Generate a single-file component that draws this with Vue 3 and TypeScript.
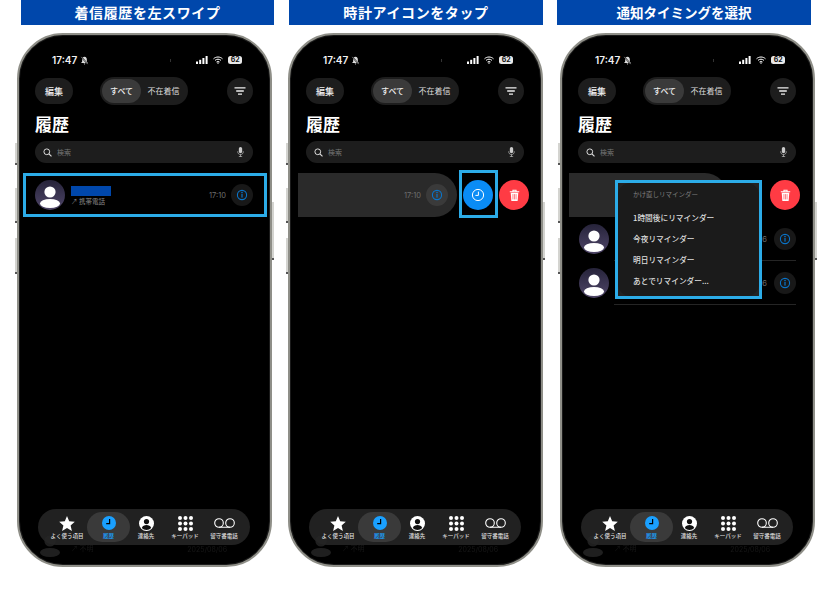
<script setup lang="ts">
interface Panel { id: number; title: string; rows: number }
const panels: Panel[] = [
  { id: 1, title: '着信履歴を左スワイプ', rows: 0 },
  { id: 2, title: '時計アイコンをタップ', rows: 0 },
  { id: 3, title: '通知タイミングを選択', rows: 2 }
]
const menuItems = ['1時間後にリマインダー', '今夜リマインダー', '明日リマインダー', 'あとでリマインダー...']
const tabs = [
  { label: 'よく使う項目', icon: 'i-star', w: 16, h: 15 },
  { label: '履歴', icon: 'i-clockfill', w: 14, h: 14, active: true },
  { label: '連絡先', icon: 'i-contact', w: 15, h: 15 },
  { label: 'キーパッド', icon: 'i-keypad', w: 15, h: 15 },
  { label: '留守番電話', icon: 'i-voicemail', w: 21, h: 10 }
]
</script>

<template>
  <div class="page">
    <svg class="defs" width="0" height="0" aria-hidden="true">
      <symbol id="i-avatar" viewBox="0 0 30 30">
        <circle cx="15" cy="12" r="5.6" fill="#fff" />
        <ellipse cx="15" cy="23.5" rx="10" ry="4.5" fill="#fff" />
      </symbol>
      <symbol id="i-info" viewBox="0 0 12 12">
        <circle cx="6" cy="6" r="4.6" fill="none" stroke="currentColor" stroke-width="1.1" />
        <rect x="5.4" y="5" width="1.2" height="3.6" fill="currentColor" />
        <circle cx="6" cy="3.6" r=".8" fill="currentColor" />
      </symbol>
      <symbol id="i-clock" viewBox="0 0 14 14">
        <circle cx="7" cy="7" r="5.6" fill="none" stroke="currentColor" stroke-width="1" />
        <path d="M7.400 3.600V7.400H4.400" fill="none" stroke="currentColor" stroke-width="1" />
      </symbol>
      <symbol id="i-clockfill" viewBox="0 0 14 14">
        <circle cx="7" cy="7" r="7" fill="#1aa0ff" />
        <path d="M7.600 3V7.600H4.200" fill="none" stroke="#000" stroke-width="1.200" />
      </symbol>
      <symbol id="i-trash" viewBox="0 0 14 16">
        <path d="M1 3.200H13M5 3V1.400H9V3" fill="none" stroke="#fff" stroke-width="1.300" />
        <path d="M2.200 4.400H11.800L11 15H3Z" fill="#fff" />
        <path d="M5 6.200V13M7 6.200V13M9 6.200V13" stroke="#ff3b44" stroke-width=".8" />
      </symbol>
      <symbol id="i-star" viewBox="0 0 16 15">
        <path d="M8 0L10.200 5.200 15.800 5.700 11.600 9.400 12.900 15 8 12 3.100 15 4.400 9.400.2 5.700 5.800 5.200Z" fill="#fff" />
      </symbol>
      <symbol id="i-contact" viewBox="0 0 15 15">
        <circle cx="7.500" cy="7.500" r="7.500" fill="#fff" />
        <circle cx="7.500" cy="5.600" r="2.600" fill="#111" />
        <path d="M2.800 12C3.600 9.800 5.400 9 7.500 9S11.400 9.800 12.200 12C11 13.300 9.400 14 7.500 14S4 13.300 2.800 12Z" fill="#111" />
      </symbol>
      <symbol id="i-keypad" viewBox="0 0 15 15">
        <g fill="#fff">
          <circle cx="2" cy="2" r="2" /><circle cx="7.500" cy="2" r="2" /><circle cx="13" cy="2" r="2" />
          <circle cx="2" cy="7.500" r="2" /><circle cx="7.500" cy="7.500" r="2" /><circle cx="13" cy="7.500" r="2" />
          <circle cx="2" cy="13" r="2" /><circle cx="7.500" cy="13" r="2" /><circle cx="13" cy="13" r="2" />
        </g>
      </symbol>
      <symbol id="i-voicemail" viewBox="0 0 21 10">
        <circle cx="5" cy="5" r="4.300" fill="none" stroke="#fff" stroke-width="1.100" />
        <circle cx="16" cy="5" r="4.300" fill="none" stroke="#fff" stroke-width="1.100" />
        <path d="M5 9.300H16" stroke="#fff" stroke-width="1.100" />
      </symbol>
    </svg>

    <section v-for="p in panels" :key="p.id" class="col" :class="`col-${p.id}`">
      <h2 class="banner">{{ p.title }}</h2>
      <div class="phone-wrap">
        <span class="side side-l1"></span>
        <span class="side side-l2"></span>
        <span class="side side-l3"></span>
        <span class="side side-r1"></span>
        <div class="phone">
          <div class="status">
            <span class="clock-text">17:47</span>
            <svg class="bell" viewBox="0 0 10 10" width="9" height="9">
              <path d="M5 .8C3.100 .8 2.400 2.400 2.400 4V6L1.200 7.800H8.800L7.600 6V4C7.600 2.400 6.900 .8 5 .8ZM4 8.300H6L5 9.700Z" fill="#ddd" />
              <path d="M1.500 1L8.500 9" stroke="#000" stroke-width="1.600" />
              <path d="M1.500 1L8.500 9" stroke="#ddd" stroke-width=".7" />
            </svg>
            <span class="island-dot"></span>
            <svg class="signal" viewBox="0 0 12 8" width="12" height="8">
              <rect x="0" y="5.500" width="2" height="2.500" fill="#fff" />
              <rect x="3.200" y="3.800" width="2" height="4.200" fill="#fff" />
              <rect x="6.400" y="2" width="2" height="6" fill="#fff" />
              <rect x="9.600" y="0" width="2" height="8" fill="#fff" />
            </svg>
            <svg class="wifi" viewBox="0 0 10 8" width="10" height="8">
              <path d="M.5 2.800C3 .4 7 .4 9.500 2.800M2 4.400C3.800 2.800 6.200 2.800 8 4.400M3.500 6C4.400 5.200 5.600 5.200 6.500 6" fill="none" stroke="#fff" stroke-width="1" />
              <circle cx="5" cy="7" r=".8" fill="#fff" />
            </svg>
            <span class="battery">62</span>
          </div>

          <div class="toolbar">
            <span class="pill edit">編集</span>
            <div class="segment">
              <span class="seg seg-on">すべて</span>
              <span class="seg">不在着信</span>
            </div>
            <span class="pill filter">
              <svg viewBox="0 0 12 8" width="12" height="8">
                <path d="M.5 .8H11.500M2.200 4H9.800M4 7.200H8" stroke="#eee" stroke-width="1.300" />
              </svg>
            </span>
          </div>

          <h1 class="heading">履歴</h1>

          <div class="search">
            <svg viewBox="0 0 10 10" width="9" height="9">
              <circle cx="4.200" cy="4.200" r="3.200" fill="none" stroke="#ddd" stroke-width="1.100" />
              <path d="M6.600 6.600L9.400 9.400" stroke="#ddd" stroke-width="1.300" />
            </svg>
            <span class="search-text">検索</span>
            <svg class="mic" viewBox="0 0 8 12" width="7" height="10">
              <rect x="2" y="0" width="4" height="7.500" rx="2" fill="#ccc" />
              <path d="M.6 5.200C.6 7.800 2 9 4 9S7.400 7.800 7.400 5.200M4 9V11.500M2 11.500H6" fill="none" stroke="#ccc" stroke-width=".8" />
            </svg>
          </div>

          <div class="list">
            <div v-if="p.id === 1" class="row">
              <span class="hl hl-row"></span>
              <span class="avatar"><svg viewBox="0 0 30 30"><use href="#i-avatar" /></svg></span>
              <div class="who">
                <span class="name-mask"></span>
                <span class="sub">↗ 携帯電話</span>
              </div>
              <span class="time">17:10</span>
              <span class="info"><svg width="12" height="12"><use href="#i-info" /></svg></span>
            </div>

            <div v-else class="swipe" :class="{ 'swipe-3': p.id === 3 }">
              <div class="swiped">
                <template v-if="p.id === 2">
                  <span class="time">17:10</span>
                  <span class="info"><svg width="12" height="12"><use href="#i-info" /></svg></span>
                </template>
              </div>
              <span v-if="p.id === 2" class="round blue">
                <span class="hl hl-blue"></span>
                <svg width="14" height="14"><use href="#i-clock" /></svg>
              </span>
              <span class="round red"><svg width="11" height="13"><use href="#i-trash" /></svg></span>
            </div>

            <div v-for="r in p.rows" :key="r" class="row row-sub">
              <span class="avatar"><svg viewBox="0 0 30 30"><use href="#i-avatar" /></svg></span>
              <div class="who"></div>
              <span class="time">17:06</span>
              <span class="info"><svg width="12" height="12"><use href="#i-info" /></svg></span>
              <span class="divider"></span>
            </div>
          </div>

          <div v-if="p.id === 3" class="menu-box">
            <div class="menu">
              <div class="menu-head">かけ直しリマインダー</div>
              <div v-for="m in menuItems" :key="m" class="menu-item">{{ m }}</div>
            </div>
          </div>

          <div class="ghost">
            <span class="avatar"><svg viewBox="0 0 30 30"><use href="#i-avatar" /></svg></span>
            <span class="ghost-sub">↗ 不明</span>
            <span class="ghost-date">2025/08/06</span>
          </div>

          <nav class="dock">
            <div v-for="t in tabs" :key="t.label" class="tab" :class="{ active: t.active }">
              <span class="tab-icon"><svg :width="t.w" :height="t.h"><use :href="`#${t.icon}`" /></svg></span>
              <span class="tab-label">{{ t.label }}</span>
            </div>
          </nav>
        </div>
      </div>
    </section>
  </div>
</template>

<style>
html, body { margin: 0; background: #fff; }
</style>

<style scoped>
.page {
  width: 832px;
  height: 600px;
  box-sizing: border-box;
  padding-left: 17px;
  display: flex;
  gap: 16px;
  overflow: hidden;
  background: #fff;
  font-family: "Noto Sans CJK JP", "Noto Sans", sans-serif;
}
.defs { position: absolute; }
.col { width: 255px; flex: none; }
.col-3 { margin-left: 1px; }
.banner {
  margin: 0 0 8px;
  height: 25px;
  width: 254px;
  background: #0047ab;
  color: #fff;
  font-size: 14px;
  font-weight: 700;
  line-height: 25px;
  text-align: center;
  letter-spacing: .6px;
}
.col-1 .banner { margin-left: 4px; width: 253px; }
.col-2 .banner { margin-left: 1px; }
.col-3 .banner { margin-left: -3px; font-size: 13.500px; letter-spacing: 0; }

.phone-wrap { position: relative; width: 255px; height: 534px; }
.side { position: absolute; width: 2px; background: #d4d4d0; border-bottom: 2px solid #555; }
.side-l1 { left: -2px; top: 110px; height: 20px; }
.side-l2 { left: -2px; top: 155px; height: 33px; }
.side-l3 { left: -2px; top: 205px; height: 34px; }
.side-r1 { right: -2px; top: 169px; height: 56px; }
.phone {
  position: relative;
  box-sizing: border-box;
  width: 255px;
  height: 534px;
  padding: 17px 17px 0 16px;
  border: 2px solid #8f8f88;
  border-radius: 46px;
  background: #000;
  box-shadow: inset 0 0 0 1px #1b1b1b;
  overflow: hidden;
  color: #fff;
}

.status { height: 16px; display: flex; align-items: center; padding-left: 17px; }
.clock-text { font: 600 10px "Inter", sans-serif; color: #f2f2f2; }
.bell { margin-left: 3px; }
.island-dot { width: 1px; height: 3px; margin-left: 81px; background: #333; }
.signal { margin-left: 25px; }
.wifi { margin-left: 5px; }
.battery {
  margin-left: 5px;
  width: 14px;
  height: 8px;
  border-radius: 2.500px;
  background: #e8e8e8;
  color: #111;
  font: 700 7px/8px "Inter", sans-serif;
  text-align: center;
}

.toolbar { margin-top: 9px; height: 28px; display: flex; align-items: center; justify-content: space-between; }
.pill {
  height: 26px;
  background: #1d1d1d;
  border-radius: 13px;
  display: flex;
  align-items: center;
  justify-content: center;
  font-size: 9px;
  font-weight: 500;
  color: #eee;
}
.edit { width: 38px; }
.filter { width: 26px; }
.segment {
  box-sizing: border-box;
  width: 88px;
  height: 28px;
  padding: 2px;
  margin-left: 27px;
  margin-right: 39px;
  background: #1d1d1d;
  border-radius: 14px;
  display: flex;
  align-items: center;
}
.seg { flex: 1 1 45px; height: 24px; line-height: 24px; text-align: center; font-size: 8px; color: #ddd; white-space: nowrap; }
.seg-on { flex: 0 0 39px; background: #3a3a3a; border-radius: 12px; font-weight: 500; color: #eee; }

.heading { margin: 7px 0 5px; height: 24px; line-height: 24px; font-size: 17px; font-weight: 700; color: #fff; }

.search {
  height: 22px;
  box-sizing: border-box;
  padding: 0 9px 0 8px;
  background: #1d1d1d;
  border-radius: 11px;
  display: flex;
  align-items: center;
}
.search-text { margin-left: 5px; font-size: 7px; color: #777; }
.mic { margin-left: auto; }

.list { margin-top: 10px; }
.row { position: relative; height: 44px; display: flex; align-items: center; }
.row-sub { margin-left: 1px; }
.avatar {
  width: 30px;
  height: 30px;
  flex: none;
  border-radius: 50%;
  overflow: hidden;
  background: linear-gradient(#26233a, #4f4668);
}
.avatar svg { display: block; width: 30px; height: 30px; }
.who { margin-left: 6px; flex: 1; display: flex; flex-direction: column; align-items: flex-start; gap: 1px; }
.name-mask { width: 40px; height: 10px; background: #0047ab; }
.sub { font-size: 6.500px; line-height: 8px; color: #8a8a8a; }
.time { font: 7.500px "Inter", sans-serif; color: #6e6e6e; margin-right: 5px; }
.row-sub .time { margin-right: 7px; }
.info {
  width: 22px;
  height: 22px;
  flex: none;
  border-radius: 50%;
  background: #181818;
  color: #0a74c9;
  display: flex;
  align-items: center;
  justify-content: center;
}
.hl { position: absolute; border: 3px solid #2cace8; box-sizing: border-box; pointer-events: none; }
.hl-row { left: -12px; right: -14px; top: 0; bottom: 0; }
.divider { position: absolute; left: 35px; right: 0; bottom: 0; height: 1px; background: #252525; }

.swipe { display: flex; align-items: center; height: 44px; margin-left: -8px; }
.swiped {
  width: 159px;
  height: 44px;
  flex: none;
  box-sizing: border-box;
  padding-right: 9px;
  background: #2a2a2a;
  border-radius: 0 22px 22px 0;
  display: flex;
  align-items: center;
  justify-content: flex-end;
}
.swiped .info { background: #3a3a3a; }
.swipe-3 { margin-left: -9px; }
.swipe-3 .swiped { width: 158px; }
.round {
  position: relative;
  width: 30px;
  height: 30px;
  flex: none;
  border-radius: 50%;
  display: flex;
  align-items: center;
  justify-content: center;
}
.blue { margin-left: 6px; background: #0a8cf5; color: #fff; }
.red { margin-left: 6px; background: #ff3b44; }
.swipe-3 .red { margin-left: auto; margin-right: -4px; }
.hl-blue { left: -4px; right: -5px; top: -10px; bottom: -8px; }

.menu-box {
  position: absolute;
  left: 53px;
  top: 145px;
  width: 147px;
  height: 119px;
  box-sizing: border-box;
  border: 3px solid #2cace8;
  background: #222;
}
.menu {
  height: 100%;
  box-sizing: border-box;
  padding: 5px 0 0 15px;
  background: #1b1b1b;
  border-radius: 12px;
}
.menu-head { height: 15px; line-height: 13px; font-size: 6.500px; color: #808080; margin-bottom: 4px; }
.menu-item { height: 21px; line-height: 21px; font-size: 7.700px; font-weight: 500; color: #dedede; white-space: nowrap; }

.ghost { position: absolute; left: 16px; right: 17px; top: 494px; height: 30px; opacity: .12; filter: blur(.6px); }
.ghost-sub { position: absolute; left: 36px; top: 14px; font-size: 7px; color: #aaa; }
.ghost-date { position: absolute; right: 26px; top: 16px; font: 7px "Inter", sans-serif; color: #aaa; }

.dock {
  position: absolute;
  left: 19px;
  top: 474px;
  width: 212px;
  height: 36px;
  box-sizing: border-box;
  padding: 3px 3px;
  background: rgba(38, 38, 38, .88);
  border-radius: 18px;
  display: grid;
  grid-template-columns: 46px 43px 32px 46px 32px;
}
.tab { display: flex; flex-direction: column; align-items: center; justify-content: flex-start; color: #ddd; }
.tab:first-child { padding-left: 6px; }
.tab.active { background: #3a3a3a; border-radius: 15px; color: #1aa0ff; }
.tab-icon { height: 20px; margin-top: 1px; display: flex; align-items: center; justify-content: center; }
.tab-icon svg { display: block; }
.tab-label { font-size: 5.500px; line-height: 7px; font-weight: 500; white-space: nowrap; }
</style>
